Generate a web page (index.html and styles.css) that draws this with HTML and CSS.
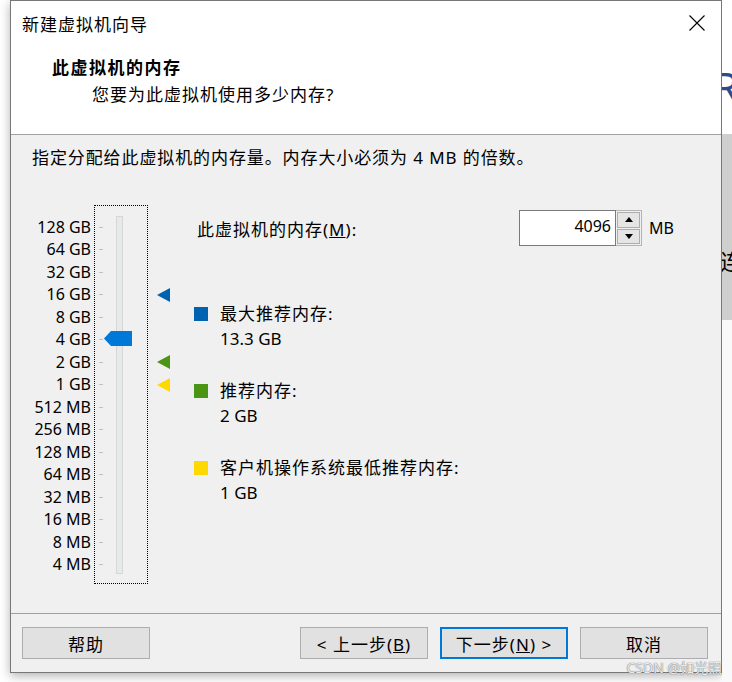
FILE: index.html
```html
<!DOCTYPE html>
<html lang="zh-CN">
<head>
    <meta charset="utf-8" />
    <title>新建虚拟机向导</title>
    <link rel="stylesheet" href="styles.css">
</head>
<body>
    <div class="screen">
        <div class="dialog">
            <div class="titlebar">
                <span class="title">新建虚拟机向导</span>
                <svg class="close" width="16" height="16" viewBox="0 0 16 16">
                    <path d="M0.5 0.5 L15.5 15.5 M15.5 0.5 L0.5 15.5" stroke="#000" stroke-width="1.1" fill="none" />
                </svg>
            </div>
            <div class="header">
                <h1>此虚拟机的内存</h1>
                <p>您要为此虚拟机使用多少内存?</p>
            </div>

            <div class="content">
                <p class="intro">指定分配给此虚拟机的内存量。内存大小必须为 4 MB 的倍数。</p>
                <div class="main">
                    <!-- 刻度 -->
                    <div class="labels">
                        <div>128 GB</div>
                        <div>64 GB</div>
                        <div>32 GB</div>
                        <div>16 GB</div>
                        <div>8 GB</div>
                        <div>4 GB</div>
                        <div>2 GB</div>
                        <div>1 GB</div>
                        <div>512 MB</div>
                        <div>256 MB</div>
                        <div>128 MB</div>
                        <div>64 MB</div>
                        <div>32 MB</div>
                        <div>16 MB</div>
                        <div>8 MB</div>
                        <div>4 MB</div>
                    </div>
                    <div class="slider">
                        <div class="tick"></div><div class="tick"></div><div class="tick"></div><div class="tick"></div>
                        <div class="tick"></div><div class="tick"></div><div class="tick"></div><div class="tick"></div>
                        <div class="tick"></div><div class="tick"></div><div class="tick"></div><div class="tick"></div>
                        <div class="tick"></div><div class="tick"></div><div class="tick"></div><div class="tick"></div>
                        <div class="track"></div>
                        <svg class="thumb" width="28" height="15" viewBox="0 0 28 15">
                            <polygon points="0,7.5 7,0 28,0 28,15 7,15" fill="#0078d7" />
                        </svg>
                    </div>
                    <div class="marks">
                        <div class="mark"></div>
                        <div class="mark"></div>
                        <div class="mark"></div>
                        <div class="mark"><span class="tri tri-max"></span></div>
                        <div class="mark"></div>
                        <div class="mark"></div>
                        <div class="mark"><span class="tri tri-rec"></span></div>
                        <div class="mark"><span class="tri tri-min"></span></div>
                    </div>

                    <div class="details">
                        <div class="mem-row">
                            <span class="mem-label">此虚拟机的内存(<u>M</u>):</span>
                            <div class="spin">
                                <div class="spin-input">4096</div>
                                <div class="spin-btns">
                                    <div class="spin-btn"><span class="arrow-up"></span></div>
                                    <div class="spin-btn"><span class="arrow-down"></span></div>
                                </div>
                            </div>
                            <span class="unit">MB</span>
                        </div>

                        <div class="legend">
                            <div class="item">
                                <span class="swatch sw-max"></span>
                                <div class="item-text">
                                    <div class="item-title">最大推荐内存:</div>
                                    <div class="item-value">13.3 GB</div>
                                </div>
                            </div>
                            <div class="item">
                                <span class="swatch sw-rec"></span>
                                <div class="item-text">
                                    <div class="item-title">推荐内存:</div>
                                    <div class="item-value">2 GB</div>
                                </div>
                            </div>
                            <div class="item">
                                <span class="swatch sw-min"></span>
                                <div class="item-text">
                                    <div class="item-title">客户机操作系统最低推荐内存:</div>
                                    <div class="item-value">1 GB</div>
                                </div>
                            </div>
                        </div>
                    </div>
                </div>
            </div>

            <div class="footer">
                <button class="btn btn-help">帮助</button>
                <button class="btn">&lt; 上一步(<u>B</u>)</button>
                <button class="btn btn-default">下一步(<u>N</u>) &gt;</button>
                <button class="btn">取消</button>
            </div>
        </div>

        <!-- 背后窗口的边缘 -->
        <div class="backdrop">
            <div class="bd-top"><span class="bd-r">R</span></div>
            <div class="bd-mid"><span class="bd-char">连</span></div>
            <div class="bd-bottom"></div>
        </div>

        <div class="watermark">CSDN @如光照</div>
    </div>
</body>
</html>
```

FILE: styles.css
```css
* {
    box-sizing: border-box;
}
body {
    margin: 0;
    background-color: #fff;
    font-family: "Noto Sans", "Noto Sans CJK SC", sans-serif;
    color: #000;
}
.screen {
    display: flex;
    height: 682px;
    overflow: hidden;
    position: relative;
}

/* 对话框 */
.dialog {
    margin-left: 10px;
    width: 712px;
    height: 673px;
    border: 1px solid #777;
    display: flex;
    flex-direction: column;
    background-color: #f0f0f0;
    box-shadow: 0 3px 10px rgba(0, 0, 0, 0.3);
}
.titlebar {
    height: 44px;
    background-color: #fff;
    display: flex;
    align-items: center;
    justify-content: space-between;
    padding: 0 16px 0 11px;
}
.title {
    font-size: 17px;
    letter-spacing: 1px;
}
.header {
    background-color: #fff;
    border-bottom: 1px solid #a0a0a0;
    padding: 10.5px 0 27.5px 41px;
}
.header h1 {
    margin: 0;
    font-size: 17px;
    font-weight: bold;
    line-height: 24px;
    letter-spacing: 1.5px;
}
.header p {
    margin: 3px 0 0 40px;
    font-size: 17px;
    line-height: 24px;
    letter-spacing: 1px;
}

.content {
    flex: 1;
    padding: 11px 0 0 21px;
}
.intro {
    margin: 0;
    font-size: 17px;
    line-height: 24px;
    letter-spacing: 0.9px;
}
.main {
    display: flex;
    align-items: flex-start;
    margin-top: 35px;
}

/* 滑块 */
.labels {
    width: 59px;
    padding-top: 10.75px;
    text-align: right;
    font-size: 16px;
    white-space: nowrap;
}
.labels div {
    height: 22.5px;
    line-height: 22.5px;
}
.slider {
    position: relative;
    width: 54px;
    height: 379px;
    margin-left: 3px;
    border: 1px dotted #000;
    padding-top: 9.75px;
}
.tick {
    height: 22.5px;
    display: flex;
    align-items: center;
    padding-left: 4px;
}
.tick::before {
    content: "";
    width: 4px;
    height: 1px;
    background-color: #c0c0c0;
}
.track {
    position: absolute;
    left: 21px;
    top: 10px;
    width: 7px;
    height: 358px;
    background-color: #e7eaea;
    border: 1px solid #d6d6d6;
}
.thumb {
    position: absolute;
    left: 9px;
    top: 125px;
}
.marks {
    width: 13px;
    margin-left: 9px;
    padding-top: 10.75px;
}
.mark {
    height: 22.5px;
    display: flex;
    align-items: center;
}
.tri {
    width: 0;
    height: 0;
    border-top: 7px solid transparent;
    border-bottom: 7px solid transparent;
    border-right: 13px solid;
}
.tri-max {
    border-right-color: #0063b1;
}
.tri-rec {
    border-right-color: #4a9614;
}
.tri-min {
    border-right-color: #ffd800;
}

/* 右侧 */
.details {
    flex: 1;
    margin-left: 24px;
}
.mem-row {
    display: flex;
    align-items: center;
    height: 36px;
    margin-top: 5px;
}
.mem-label {
    width: 322px;
    margin-left: 3px;
    font-size: 17px;
    letter-spacing: 1px;
}
.spin {
    display: flex;
    height: 36px;
}
.spin-input {
    width: 97px;
    border: 1px solid #7a7a7a;
    background-color: #fff;
    text-align: right;
    padding-right: 4px;
    font-size: 16px;
    line-height: 30px;
}
.spin-btns {
    width: 26px;
    border: 1px solid #b4b4b4;
    border-left: none;
    display: flex;
    flex-direction: column;
    gap: 1px;
    padding: 1px;
}
.spin-btn {
    flex: 1;
    background-color: #e5e5e5;
    border: 1px solid #adadad;
    display: flex;
    align-items: center;
    justify-content: center;
}
.arrow-up {
    border-left: 4px solid transparent;
    border-right: 4px solid transparent;
    border-bottom: 5px solid #000;
}
.arrow-down {
    border-left: 4px solid transparent;
    border-right: 4px solid transparent;
    border-top: 5px solid #000;
}
.unit {
    margin-left: 7px;
    font-size: 16px;
}

.legend {
    margin-top: 54.5px;
}
.item {
    display: flex;
    margin-bottom: 27px;
}
.swatch {
    width: 14px;
    height: 14px;
    margin-top: 6.5px;
    margin-right: 12px;
}
.sw-max {
    background-color: #0063b1;
}
.sw-rec {
    background-color: #4a9614;
}
.sw-min {
    background-color: #ffd800;
}
.item-text {
    line-height: 25px;
}
.item-title {
    font-size: 17px;
    letter-spacing: 1px;
}
.item-value {
    font-size: 17px;
}

/* 按钮 */
.footer {
    height: 59px;
    border-top: 1px solid #a0a0a0;
    padding: 13px 13px 0 11px;
    display: flex;
    align-items: flex-start;
    gap: 12px;
}
.btn {
    width: 128px;
    height: 32px;
    background-color: #e1e1e1;
    border: 1px solid #adadad;
    font-family: inherit;
    font-size: 17px;
    letter-spacing: 1px;
    color: #000;
    padding: 0;
}
.btn-help {
    margin-right: auto;
}
.btn-default {
    border: 2px solid #0078d7;
}

/* 背后窗口 */
.backdrop {
    width: 10px;
    display: flex;
    flex-direction: column;
    overflow: hidden;
}
.bd-top {
    height: 134px;
    background-color: #fff;
    padding-top: 66px;
}
.bd-r {
    display: block;
    margin-left: -9px;
    font-size: 42px;
    line-height: 1;
    color: #2c4b8b;
}
.bd-mid {
    height: 186px;
    background-color: #cfcfcf;
    padding-top: 116px;
}
.bd-char {
    display: block;
    margin-left: -2px;
    font-size: 22px;
    line-height: 1;
    white-space: nowrap;
}
.bd-bottom {
    flex: 1;
    background-color: #f9f9f9;
}

.watermark {
    position: absolute;
    right: 10px;
    bottom: 5px;
    font-size: 14px;
    color: rgba(255, 255, 255, 0.85);
    text-shadow: 0 0 1px #777, 0 0 1px #777;
}
```
